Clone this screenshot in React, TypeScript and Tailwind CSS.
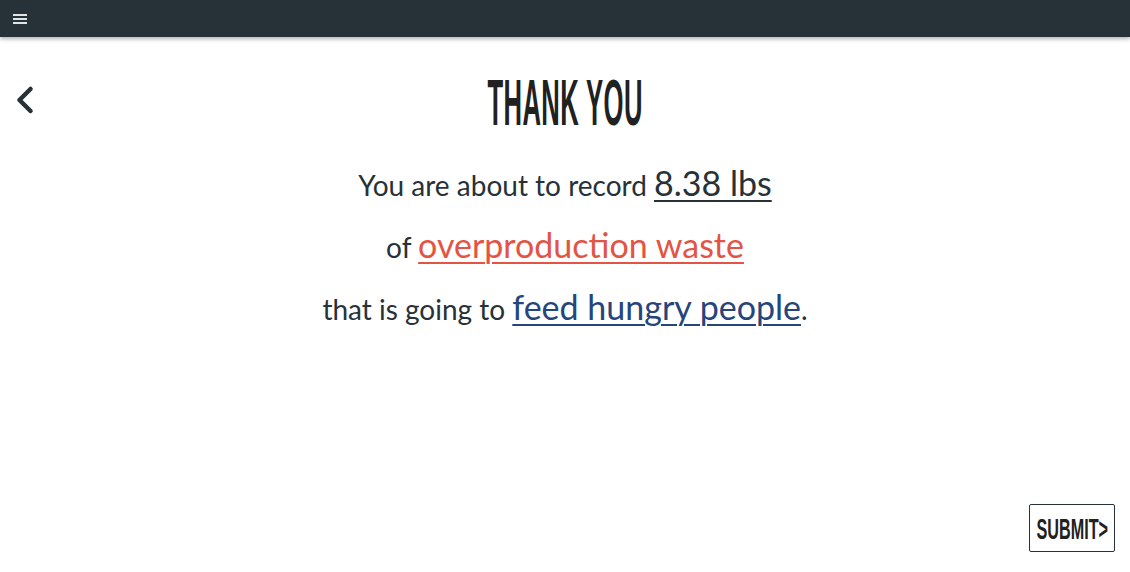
import React from 'react';
import { ChevronLeft } from 'lucide-react';

const condensed = { fontFamily: '"Liberation Sans", Arial, sans-serif' };

const App: React.FC = () => {
  return (
    <div className="min-h-screen bg-white text-[#263238]" style={{ fontFamily: 'Lato, "Open Sans", sans-serif' }}>
      {/* Top bar */}
      <header className="h-[37px] bg-[#263238] shadow-[0_2px_4px_rgba(0,0,0,0.3)] flex items-center px-[13px]">
        <button className="flex flex-col gap-[2px] w-[14px]">
          <span className="block h-[2px] w-full bg-[#e0e4e6]" />
          <span className="block h-[2px] w-full bg-[#e0e4e6]" />
          <span className="block h-[2px] w-full bg-[#e0e4e6]" />
        </button>
      </header>

      <div className="relative h-[535px]">
        <button className="absolute left-[3px] top-[41px] text-[#263238]">
          <ChevronLeft size={44} strokeWidth={2.5} />
        </button>

        <div className="flex flex-col items-center pt-[30px]">
          <h1
            className="text-[64px] leading-[72px] font-bold text-[#212121] scale-x-[0.4] origin-center whitespace-nowrap tracking-[1px]"
            style={condensed}
          >
            THANK YOU
          </h1>

          <div className="mt-[16px] flex flex-col items-center text-[28px]">
            <p className="h-[61px] leading-[61px]">
              You are about to record{' '}
              <a className="text-[34px] leading-none underline underline-offset-[4px] decoration-[2px]">8.38 lbs</a>
            </p>
            <p className="h-[62px] leading-[62px]">
              of{' '}
              <a className="text-[34px] leading-none text-[#e35444] underline underline-offset-[4px] decoration-[2px]">overproduction waste</a>
            </p>
            <p className="h-[62px] leading-[62px]">
              that is going to{' '}
              <a className="text-[34px] leading-none text-[#26457c] underline underline-offset-[4px] decoration-[2px]">feed hungry people</a>.
            </p>
          </div>
        </div>

        <button className="absolute right-[15px] bottom-[20px] w-[86px] h-[48px] border border-[#263238] rounded-[2px] flex items-center justify-center">
          <span
            className="text-[30px] font-bold text-[#212121] scale-x-[0.54] origin-center whitespace-nowrap"
            style={condensed}
          >
            SUBMIT&gt;
          </span>
        </button>
      </div>
    </div>
  );
};

export default App;
